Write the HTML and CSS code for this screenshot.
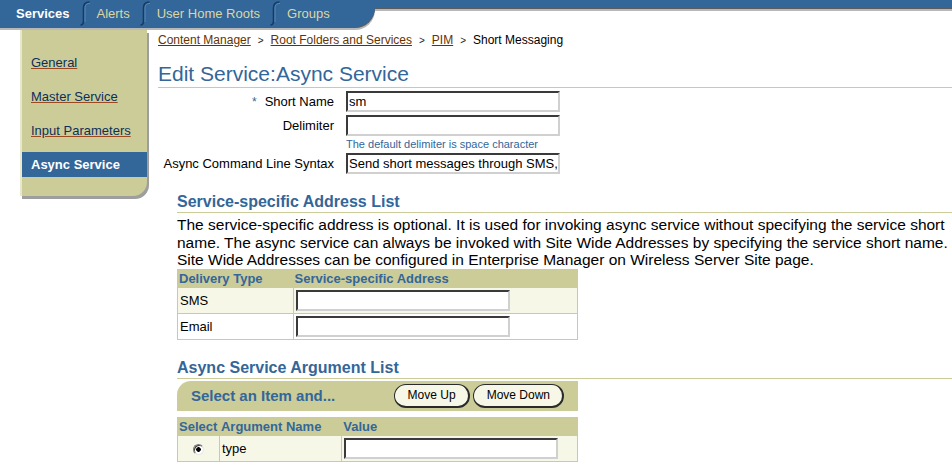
FILE: index.html
```html
<!DOCTYPE html>
<html lang="en">
<head>
<meta charset="utf-8">
<title>Edit Service:Async Service</title>
<link rel="stylesheet" href="styles.css">
</head>
<body>
<header class="tabbar">
  <nav class="tabs">
    <a class="tab tab-active">Services</a>
    <span class="tab-sep"><svg viewBox="0 0 10 25" width="10" height="25"><path class="sep-dark" d="M9.5 1 C5.5 1 3.5 2.5 3.5 7 L3.5 20 C3.5 23 2.5 24 0.5 24"/><path class="sep-light" d="M10 2.4 C6.8 2.4 5 3.8 5 7.6 L5 21"/></svg></span>
    <a class="tab">Alerts</a>
    <span class="tab-sep"><svg viewBox="0 0 10 25" width="10" height="25"><path class="sep-dark" d="M9.5 1 C5.5 1 3.5 2.5 3.5 7 L3.5 20 C3.5 23 2.5 24 0.5 24"/><path class="sep-light" d="M10 2.4 C6.8 2.4 5 3.8 5 7.6 L5 21"/></svg></span>
    <a class="tab">User Home Roots</a>
    <span class="tab-sep"><svg viewBox="0 0 10 25" width="10" height="25"><path class="sep-dark" d="M9.5 1 C5.5 1 3.5 2.5 3.5 7 L3.5 20 C3.5 23 2.5 24 0.5 24"/><path class="sep-light" d="M10 2.4 C6.8 2.4 5 3.8 5 7.6 L5 21"/></svg></span>
    <a class="tab">Groups</a>
  </nav>
  <div class="tabbar-rest"></div>
</header>

<div class="page">
  <aside class="sidenav">
    <a class="side-link">General</a>
    <a class="side-link">Master Service</a>
    <a class="side-link">Input Parameters</a>
    <span class="side-link side-active">Async Service</span>
  </aside>

  <main class="content">
    <div class="crumbs">
      <a class="crumb">Content Manager</a><span class="crumb-sep">&gt;</span><a class="crumb">Root Folders and Services</a><span class="crumb-sep">&gt;</span><a class="crumb">PIM</a><span class="crumb-sep">&gt;</span><span class="crumb-current">Short Messaging</span>
    </div>
    <h1 class="page-title">Edit Service:Async Service</h1>

    <div class="form">
      <label class="form-label"><span class="req">*</span>Short Name</label>
      <input class="field" type="text" value="sm">
      <label class="form-label">Delimiter</label>
      <input class="field" type="text" value="">
      <div class="help">The default delimiter is space character</div>
      <label class="form-label">Async Command Line Syntax</label>
      <input class="field" type="text" value="Send short messages through SMS, Email">
    </div>

    <section class="section section-first">
      <h2 class="section-title">Service-specific Address List</h2>
      <p class="section-text">The service-specific address is optional. It is used for invoking async service without specifying the service short name. The async service can always be invoked with Site Wide Addresses by specifying the service short name. Site Wide Addresses can be configured in Enterprise Manager on Wireless Server Site page.</p>
      <table class="grid grid-address">
        <colgroup><col class="c-type"><col class="c-addr"></colgroup>
        <tr><th>Delivery Type</th><th>Service-specific Address</th></tr>
        <tr class="alt"><td>SMS</td><td><input class="field" type="text" value=""></td></tr>
        <tr><td>Email</td><td><input class="field" type="text" value=""></td></tr>
      </table>
    </section>

    <section class="section section-second">
      <h2 class="section-title">Async Service Argument List</h2>
      <div class="ctrlbar">
        <span class="ctrl-title">Select an Item and...</span>
        <button class="btn" type="button">Move Up</button>
        <button class="btn" type="button">Move Down</button>
      </div>
      <table class="grid grid-args">
        <colgroup><col class="c-sel"><col class="c-name"><col class="c-val"></colgroup>
        <tr><th class="th-sel">Select</th><th>Argument Name</th><th>Value</th></tr>
        <tr class="alt"><td class="td-sel"><span class="radio"></span></td><td>type</td><td><input class="field" type="text" value=""></td></tr>
      </table>
    </section>
  </main>
</div>
</body>
</html>
```
FILE: styles.css
```css
html, body {
  margin: 0;
  padding: 0;
  overflow: hidden;
}
body {
  font-family: "Liberation Sans", Arial, sans-serif;
  font-size: 13px;
  color: #000;
  background: #fff;
}

/* ---------- tab bar ---------- */
.tabbar {
  display: flex;
  align-items: flex-start;
  height: 27px;
}
.tabs {
  flex: 0 0 375px;
  height: 27px;
  box-sizing: border-box;
  padding-left: 16px;
  background: #336699;
  border-bottom-right-radius: 20px 20px;
  box-shadow: 0 1px 0 #5c5c5c, 0 3px 0 #b8b8b8;
  display: flex;
  align-items: center;
  position: relative;
  z-index: 1;
}
.tab {
  font-size: 13px;
  line-height: 16px;
  color: #dcd6a2;
  white-space: nowrap;
  text-decoration: none;
}
.tab-active {
  color: #fff;
  font-weight: bold;
}
.tab-sep {
  align-self: flex-start;
  display: block;
  width: 10px;
  height: 25px;
  margin: 1px 7px 0 10px;
}
.tab-sep svg { display: block; }
.sep-dark { fill: none; stroke: #163a66; stroke-width: 1.6; }
.sep-light { fill: none; stroke: #5f8dbf; stroke-width: 0.9; }
.tabbar-rest {
  flex: 1;
  height: 8px;
  background: #336699;
  box-shadow: 0 1px 0 #5c5c5c, 0 3px 0 #b8b8b8;
}

/* ---------- page ---------- */
.page {
  display: flex;
  align-items: flex-start;
  margin-top: 3px;
}

.sidenav {
  flex: 0 0 127px;
  margin-left: 20px;
  box-sizing: border-box;
  background: #cccc99;
  border-left: 2px solid #e8e8cc;
  border-bottom-right-radius: 14px;
  box-shadow: 2px 3px 0 #9e9e9e;
  padding: 20px 0 19px 0;
  display: flex;
  flex-direction: column;
  gap: 9px;
}
.side-link {
  display: block;
  height: 25px;
  line-height: 25px;
  padding-left: 9px;
  font-size: 13px;
  color: #0d2f59;
  text-decoration: underline;
  text-decoration-color: #9a4a1c;
  text-underline-offset: 1px;
  white-space: nowrap;
}
.side-active {
  background: #336699;
  color: #fff;
  font-weight: bold;
  text-decoration: none;
}

.content {
  flex: 1;
  min-width: 0;
  margin-left: 11px;
}

.crumbs {
  margin-top: 3px;
  font-size: 12px;
  line-height: 14px;
  white-space: nowrap;
}
.crumb {
  color: #663300;
  text-decoration: underline;
}
.crumb-sep {
  font-size: 10px;
  margin: 0 7px;
  color: #222;
}
.crumb-current { color: #000; }

.page-title {
  margin: 14px 0 0 0;
  font-size: 21px;
  font-weight: normal;
  line-height: 24px;
  color: #336699;
  padding-bottom: 1px;
  border-bottom: 1px solid #cccc99;
}

/* ---------- form ---------- */
.form {
  display: grid;
  grid-template-columns: 176px 214px;
  column-gap: 12px;
  row-gap: 3px;
  align-items: center;
  margin-top: 3px;
}
.form-label {
  text-align: right;
  font-size: 13px;
  white-space: nowrap;
}
.req {
  color: #336699;
  margin-right: 8px;
  font-size: 12px;
}
.field {
  display: block;
  width: 214px;
  height: 21px;
  box-sizing: border-box;
  margin: 0;
  padding: 0 1px;
  border: 2px solid;
  border-color: #3a3a3a #d0d0d0 #d0d0d0 #3a3a3a;
  background: #fff;
  font-family: "Liberation Sans", Arial, sans-serif;
  font-size: 13px;
  color: #000;
  outline: none;
}
.help {
  grid-column: 2;
  font-size: 11px;
  line-height: 11px;
  color: #336699;
  white-space: nowrap;
}

/* ---------- sections ---------- */
.section { margin-left: 19px; }
.section-first { margin-top: 18px; }
.section-second { margin-top: 18px; }
.section-title {
  margin: 0;
  font-size: 16px;
  font-weight: bold;
  line-height: 19px;
  color: #336699;
  padding-bottom: 1px;
  border-bottom: 1px solid #cccc99;
}
.section-text {
  margin: 3px 0 0 0;
  font-size: 15.5px;
  line-height: 17.5px;
}

.grid {
  border-collapse: collapse;
  width: 401px;
}
.grid th, .grid td {
  border: 1px solid #cccc99;
  text-align: left;
  vertical-align: middle;
}
.grid th {
  background: #cccc99;
  color: #336699;
  font-weight: bold;
  font-size: 13px;
  line-height: 15px;
  padding: 1px 1px;
}
.grid td {
  padding: 2px 2px;
  font-size: 13px;
}
.grid .alt td { background: #f7f7e7; }
.c-type { width: 116px; }
.c-addr { width: 285px; }
.c-sel { width: 42px; }
.c-name { width: 123px; }
.c-val { width: 236px; }

.ctrlbar {
  margin-top: 2px;
  width: 401px;
  height: 30px;
  box-sizing: border-box;
  padding: 0 14px;
  background: #cccc99;
  border-top-left-radius: 14px;
  display: flex;
  align-items: center;
  gap: 3px;
}
.ctrl-title {
  flex: 1;
  font-size: 15px;
  font-weight: bold;
  color: #336699;
}
.btn {
  height: 24px;
  padding: 0 12px 0 13px;
  border-radius: 12px;
  border: 1px solid #2a2a2a;
  border-right-width: 2px;
  border-bottom-width: 2px;
  background: #f7f7e7;
  font-family: "Liberation Sans", Arial, sans-serif;
  font-size: 12px;
  color: #000;
  cursor: pointer;
}

.grid-args { margin-top: 6px; }
.grid-args td { height: 21px; }
.grid .td-sel { text-align: center; }
.radio {
  display: inline-block;
  vertical-align: middle;
  width: 9px;
  height: 9px;
  border-radius: 50%;
  border: 1px solid;
  border-color: #7a7a7a #e8e8e8 #e8e8e8 #7a7a7a;
  box-shadow: inset 1px 1px 0 #404040;
  background: radial-gradient(circle, #000 0 2px, #fff 2.6px);
}
```
